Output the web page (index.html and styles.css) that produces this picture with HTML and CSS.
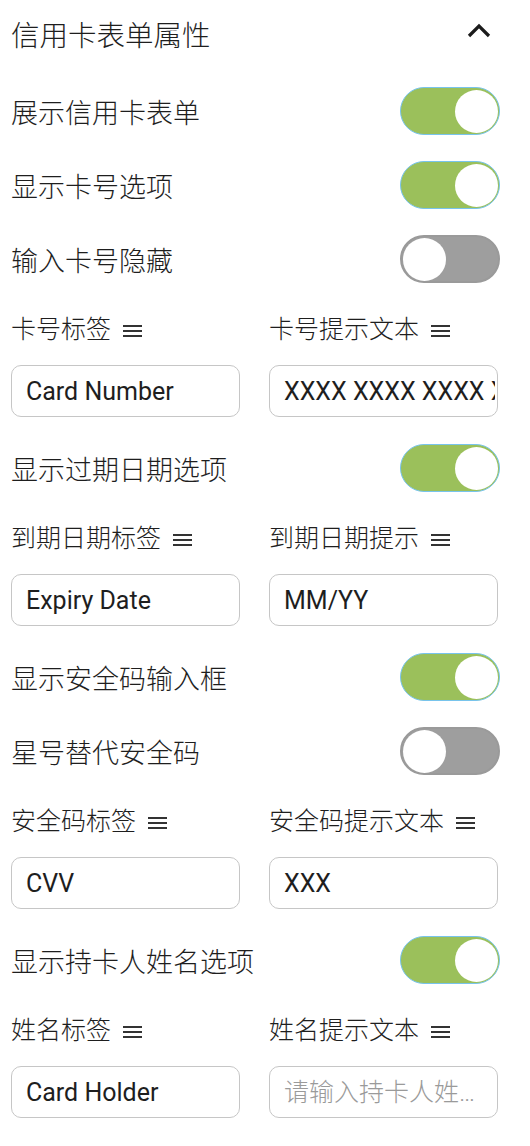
FILE: index.html
```html
<!DOCTYPE html>
<html lang="zh-CN">
<head>
    <meta charset="UTF-8">
    <meta name="viewport" content="width=device-width, initial-scale=1.0">
    <title>信用卡表单属性</title>
    <link rel="stylesheet" href="styles.css">
</head>
<body>
    <div class="panel">
        <div class="panel-header">
            <span class="panel-title">信用卡表单属性</span>
            <svg class="chevron" width="28" height="28" viewBox="0 0 28 28">
                <polyline points="4,19 14,9 24,19" fill="none" stroke="#1b1b1b" stroke-width="3.2"/>
            </svg>
        </div>

        <div class="switch-row">
            <span class="row-label">展示信用卡表单</span>
            <span class="switch on"></span>
        </div>
        <div class="switch-row">
            <span class="row-label">显示卡号选项</span>
            <span class="switch on"></span>
        </div>
        <div class="switch-row">
            <span class="row-label">输入卡号隐藏</span>
            <span class="switch"></span>
        </div>

        <div class="field-pair">
            <div class="field">
                <div class="field-label">卡号标签 <span class="menu-icon"></span></div>
                <input class="text-input" type="text" value="Card Number" readonly>
            </div>
            <div class="field">
                <div class="field-label">卡号提示文本 <span class="menu-icon"></span></div>
                <input class="text-input" type="text" value="XXXX XXXX XXXX XXXX" readonly>
            </div>
        </div>

        <div class="switch-row">
            <span class="row-label">显示过期日期选项</span>
            <span class="switch on"></span>
        </div>

        <div class="field-pair">
            <div class="field">
                <div class="field-label">到期日期标签 <span class="menu-icon"></span></div>
                <input class="text-input" type="text" value="Expiry Date" readonly>
            </div>
            <div class="field">
                <div class="field-label">到期日期提示 <span class="menu-icon"></span></div>
                <input class="text-input" type="text" value="MM/YY" readonly>
            </div>
        </div>

        <div class="switch-row">
            <span class="row-label">显示安全码输入框</span>
            <span class="switch on"></span>
        </div>
        <div class="switch-row">
            <span class="row-label">星号替代安全码</span>
            <span class="switch"></span>
        </div>

        <div class="field-pair">
            <div class="field">
                <div class="field-label">安全码标签 <span class="menu-icon"></span></div>
                <input class="text-input" type="text" value="CVV" readonly>
            </div>
            <div class="field">
                <div class="field-label">安全码提示文本 <span class="menu-icon"></span></div>
                <input class="text-input" type="text" value="XXX" readonly>
            </div>
        </div>

        <div class="switch-row">
            <span class="row-label">显示持卡人姓名选项</span>
            <span class="switch on"></span>
        </div>

        <div class="field-pair">
            <div class="field">
                <div class="field-label">姓名标签 <span class="menu-icon"></span></div>
                <input class="text-input" type="text" value="Card Holder" readonly>
            </div>
            <div class="field">
                <div class="field-label">姓名提示文本 <span class="menu-icon"></span></div>
                <input class="text-input ellipsis" type="text" placeholder="请输入持卡人姓名" readonly>
            </div>
        </div>
    </div>
</body>
</html>
```

FILE: styles.css
```css
body {
    margin: 0;
    padding: 0;
    background: #fff;
    color: #1e1e1e;
    font-family: Roboto, "Noto Sans CJK SC", sans-serif;
}

.panel {
    padding: 0 30px 0 11px;
}

.panel-header {
    height: 66px;
    margin-bottom: 8px;
    display: flex;
    align-items: center;
    justify-content: space-between;
}

.panel-title {
    font-size: 28.5px;
    font-weight: 300;
}

.chevron {
    margin-right: 7px;
    margin-top: -4px;
}

.switch-row {
    height: 74px;
    display: flex;
    align-items: center;
    justify-content: space-between;
}

.row-label {
    font-size: 27px;
    font-weight: 300;
}

.switch {
    position: relative;
    width: 100px;
    height: 48px;
    box-sizing: border-box;
    border-radius: 24px;
    background: #9e9e9e;
    border: 2px solid #9a9a9a;
}

.switch::after {
    content: "";
    position: absolute;
    top: 1px;
    left: 1px;
    width: 43px;
    height: 43px;
    border-radius: 50%;
    background: #fff;
}

.switch.on {
    background: #9bc05b;
    border: 1.5px solid #78c4ec;
}

.switch.on::after {
    left: auto;
    right: 1px;
    top: 1.5px;
}

.field-pair {
    display: grid;
    grid-template-columns: 229px 229px;
    column-gap: 29px;
    padding: 21px 0 14px;
}

.field {
    display: flex;
    flex-direction: column;
    gap: 22px;
    min-width: 0;
}

.field-label {
    font-size: 25px;
    font-weight: 300;
    line-height: 26px;
    height: 26px;
    display: flex;
    align-items: center;
    gap: 12px;
    white-space: nowrap;
}

.menu-icon {
    width: 19px;
    height: 12px;
    box-sizing: border-box;
    border-top: 2px solid #333;
    border-bottom: 2px solid #333;
    position: relative;
    margin-top: 1px;
}

.menu-icon::after {
    content: "";
    position: absolute;
    left: 0;
    right: 0;
    top: 3px;
    height: 2px;
    background: #333;
}

.text-input {
    width: 100%;
    height: 52px;
    box-sizing: border-box;
    border: 1.5px solid #c6c6c6;
    border-radius: 10px;
    padding: 0 2px 0 14px;
    font-family: Roboto, "Noto Sans CJK SC", sans-serif;
    font-size: 25px;
    color: #1e1e1e;
    background: #fff;
    outline: none;
}

.text-input::placeholder {
    color: #9a9a9a;
    font-weight: 300;
}

.ellipsis {
    padding-right: 15px;
}

.ellipsis,
.ellipsis::placeholder {
    text-overflow: ellipsis;
}
```
